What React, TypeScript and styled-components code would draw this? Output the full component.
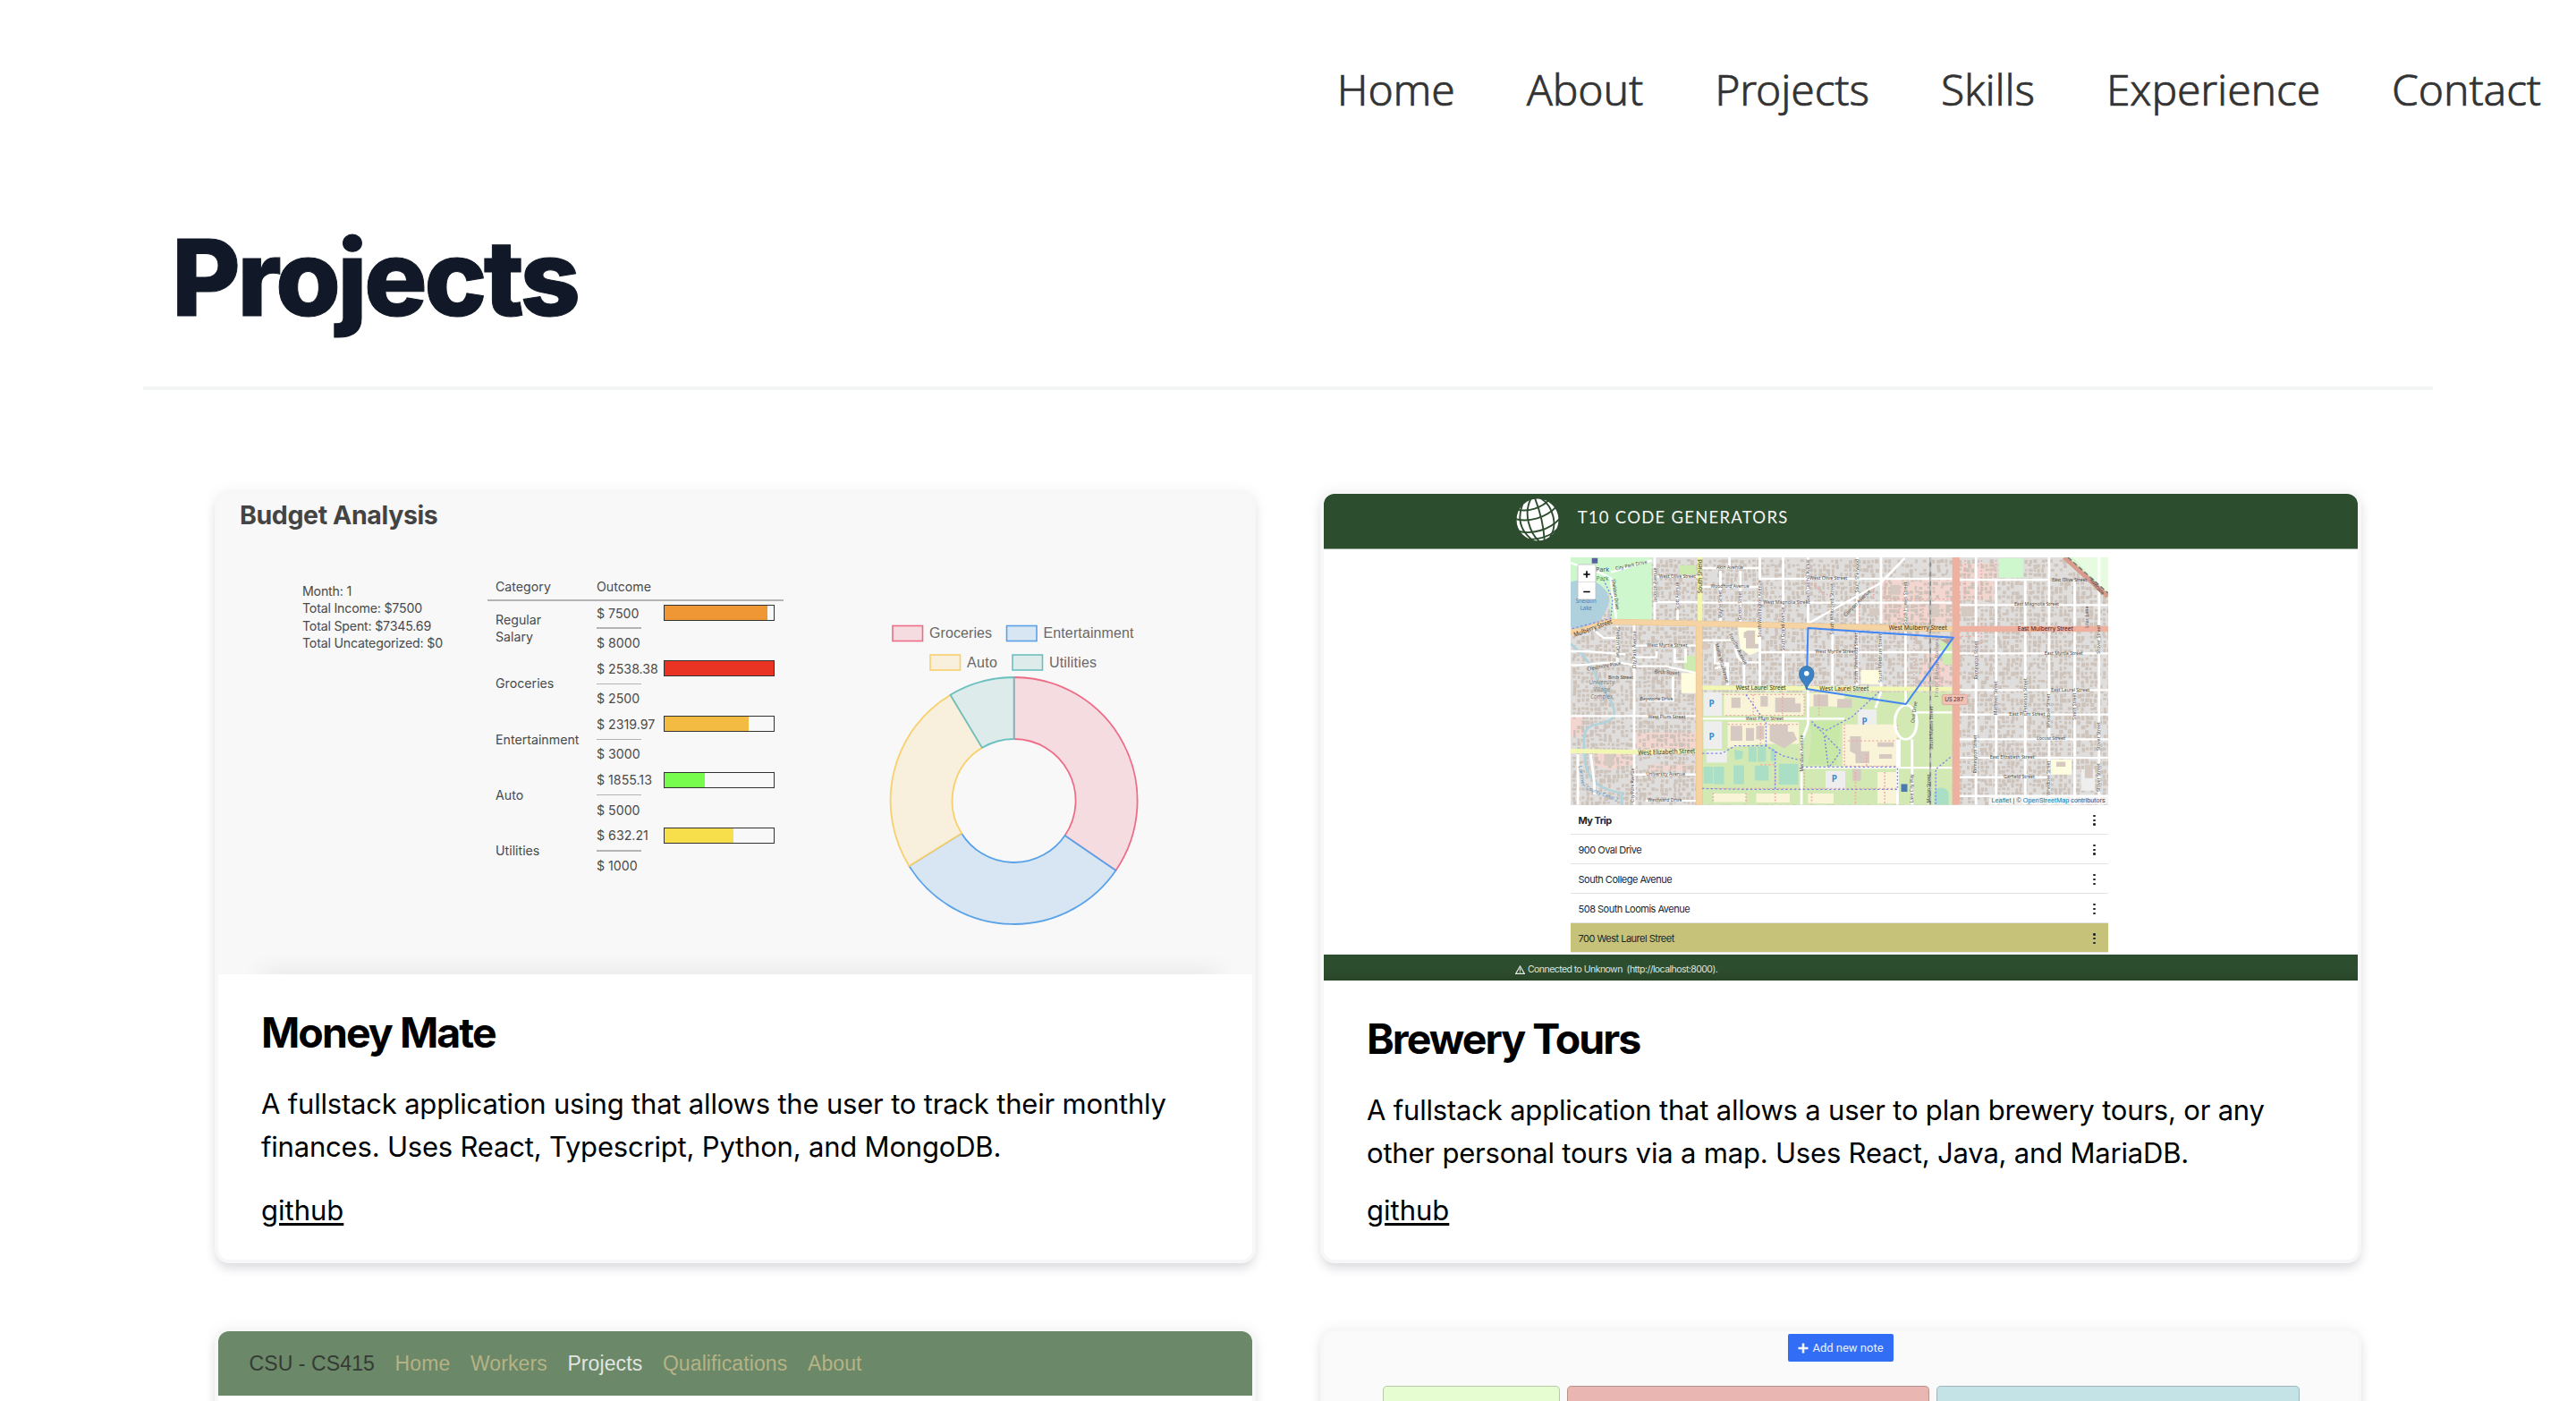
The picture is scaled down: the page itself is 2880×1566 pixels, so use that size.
import React from 'react';
import styled, { createGlobalStyle, css } from 'styled-components';

const sans = `Inter, 'Liberation Sans', sans-serif`;

const GlobalStyle = createGlobalStyle`
  *, *::before, *::after { box-sizing: border-box; }
  body { margin: 0; background: #fff; color: #000; font-family: ${sans}; }
  #root { height: 1566px; overflow: hidden; }
`;

/* ---------- page ---------- */

const Nav = styled.nav`
  display: flex;
  justify-content: flex-end;
  align-items: center;
  gap: 80px;
  height: 200px;
  padding-right: 39px;
`;

const NavLink = styled.a`
  color: #333;
  font: 300 48px/72px 'Noto Sans', 'Open Sans', sans-serif;
  letter-spacing: -0.15px;
  -webkit-text-stroke: 0.7px #333;
`;

const Main = styled.main`
  width: 2560px;
  margin: 0 auto;
`;

const PageHeader = styled.header`
  padding: 50px 32px 62px;
  border-bottom: 4px solid #f3f4f4;
`;

const PageTitle = styled.h1`
  margin: 0;
  color: #111827;
  font-size: 118px;
  line-height: 120px;
  font-weight: 800;
  letter-spacing: -3.65px;
  -webkit-text-stroke: 1px #111827;
`;

const ProjectGrid = styled.section`
  display: grid;
  grid-template-columns: 1fr 1fr;
  grid-auto-rows: 864px;
  gap: 72px;
  padding: 112px 80px 0;
`;

const Card = styled.article`
  display: flex;
  flex-direction: column;
  border: 4px solid #f7f7f8;
  border-radius: 16px;
  background: #fff;
  box-shadow: 0 8px 12px -2px rgba(30, 30, 60, 0.13), 0 0 16px rgba(0, 0, 0, 0.05);
`;

const CardBody = styled.div`
  flex: 1;
  display: flex;
  flex-direction: column;
  padding: 32px 48px 31px;
`;

const CardTitle = styled.h2`
  margin: 0 0 23px;
  font-size: 46.5px;
  line-height: 66px;
  font-weight: 700;
  letter-spacing: -1.95px;
`;

const CardText = styled.p`
  margin: 0;
  font-size: 31px;
  line-height: 48px;
  letter-spacing: -0.19px;
`;

const CardLink = styled.a`
  align-self: flex-start;
  margin-top: auto;
  font-size: 31px;
  line-height: 48px;
  letter-spacing: 0;
  text-decoration: underline;
  text-decoration-thickness: 3px;
  text-underline-offset: 3px;
`;

const Shot = styled.div<{ $height: number; $bg: string }>`
  position: relative;
  flex: none;
  height: ${(p) => p.$height}px;
  overflow: hidden;
  border-radius: 12px 12px 0 0;
  background: ${(p) => p.$bg};
`;

/* ---------- budget preview ---------- */

const BudgetShot = styled(Shot)`
  color: #4a4a4a;
  font-size: 14.2px;
  line-height: 19.6px;
  &::after {
    content: '';
    position: absolute;
    left: 50px;
    right: 40px;
    bottom: -10px;
    height: 10px;
    box-shadow: 0 0 26px 2px rgba(0, 0, 0, 0.1);
  }
`;

const BudgetTitle = styled.h3`
  margin: 0;
  padding: 6px 0 0 24px;
  color: #444;
  font-size: 28.5px;
  line-height: 36px;
  font-weight: 700;
  letter-spacing: -0.38px;
`;

const BudgetColumns = styled.div`
  display: grid;
  grid-template-columns: 301px 331px 524px;
`;

const BudgetStats = styled.div`
  padding: 56.7px 0 0 94px;
  letter-spacing: -0.2px;
`;

const BudgetTable = styled.div`
  padding-top: 48px;
`;

const rowColumns = css`
  display: grid;
  grid-template-columns: 113px 75px 124px;
  padding-left: 9px;
`;

const BudgetHead = styled.div`
  ${rowColumns}
  height: 30px;
  padding-top: 4px;
  border-bottom: 2px solid #b4b4b4;
`;

const BudgetRow = styled.div`
  ${rowColumns}
  height: 62.2px;
  align-items: center;
`;

const Category = styled.span`
  width: 60px;
  padding-bottom: 2px;
`;

const Outcome = styled.div`
  display: flex;
  flex-direction: column;
  gap: 6.2px;
  padding-bottom: 2px;
  white-space: nowrap;
`;

const OutcomeRule = styled.span`
  width: 50px;
  height: 1.5px;
  background: #b4b4b4;
`;

const Meter = styled.div`
  align-self: start;
  height: 18px;
  margin-top: 4px;
  border: 1px solid #333;
`;

const MeterFill = styled.div`
  height: 100%;
`;

const ChartText = styled.text`
  fill: #686868;
  font: 16px 'Liberation Sans', Arial, sans-serif;
`;

const budget = [
  { name: 'Regular Salary', spent: '7500', limit: '8000', color: '#ef9735', fill: 94.5 },
  { name: 'Groceries', spent: '2538.38', limit: '2500', color: '#e93323', fill: 100 },
  { name: 'Entertainment', spent: '2319.97', limit: '3000', color: '#f3bb42', fill: 77.3 },
  { name: 'Auto', spent: '1855.13', limit: '5000', color: '#77fb4c', fill: 37 },
  { name: 'Utilities', spent: '632.21', limit: '1000', color: '#f7de4b', fill: 63 },
];

const slices = [
  { name: 'Groceries', value: 2538.38, fill: '#f5dce0', stroke: '#ee6c87', x: 122, y: 105.5, w: 70 },
  { name: 'Entertainment', value: 2319.97, fill: '#d8e6f3', stroke: '#5aa2e8', x: 249.5, y: 105.5, w: 101 },
  { name: 'Auto', value: 1855.13, fill: '#f8efdc', stroke: '#f8cf6a', x: 164, y: 138, w: 34 },
  { name: 'Utilities', value: 632.21, fill: '#ddecea', stroke: '#6bc0bf', x: 256, y: 138, w: 53 },
];

function Donut() {
  const cx = 257.6;
  const cy = 301;
  const outer = 138;
  const inner = 69;
  const total = slices.reduce((sum, s) => sum + s.value, 0);
  const point = (r: number, t: number) =>
    `${(cx + r * Math.sin(t * 2 * Math.PI)).toFixed(2)} ${(cy - r * Math.cos(t * 2 * Math.PI)).toFixed(2)}`;
  let start = 0;
  return (
    <svg width="524" height="495" viewBox="0 0 524 495">
      {slices.map((s) => {
        const a = start;
        const b = start + s.value / total;
        start = b;
        return (
          <path
            key={s.name}
            d={`M${point(outer, a)}A${outer} ${outer} 0 0 1 ${point(outer, b)}L${point(inner, b)}A${inner} ${inner} 0 0 0 ${point(inner, a)}Z`}
            fill={s.fill}
            stroke={s.stroke}
            strokeWidth="1.8"
          />
        );
      })}
      {slices.map((s) => (
        <g key={s.name}>
          <rect x={s.x} y={s.y} width="33.5" height="17" fill={s.fill} stroke={s.stroke} strokeWidth="1.6" />
          <ChartText x={s.x + 41} y={s.y + 13.5} textLength={s.w}>{s.name}</ChartText>
        </g>
      ))}
    </svg>
  );
}

function BudgetPreview() {
  return (
    <BudgetShot $height={537} $bg="#f8f8f8">
      <BudgetTitle>Budget Analysis</BudgetTitle>
      <BudgetColumns>
        <BudgetStats>
          <div>Month: 1</div>
          <div>Total Income: $7500</div>
          <div>Total Spent: $7345.69</div>
          <div>Total Uncategorized: $0</div>
        </BudgetStats>
        <BudgetTable>
          <BudgetHead>
            <span>Category</span>
            <span>Outcome</span>
          </BudgetHead>
          {budget.map((b) => (
            <BudgetRow key={b.name}>
              <Category>{b.name}</Category>
              <Outcome>
                <span>$ {b.spent}</span>
                <OutcomeRule />
                <span>$ {b.limit}</span>
              </Outcome>
              <Meter>
                <MeterFill style={{ width: `${b.fill}%`, background: b.color }} />
              </Meter>
            </BudgetRow>
          ))}
        </BudgetTable>
        <Donut />
      </BudgetColumns>
    </BudgetShot>
  );
}

/* ---------- brewery preview ---------- */

const TourHeader = styled.header`
  display: flex;
  align-items: flex-start;
  gap: 21px;
  height: 62px;
  padding: 4.7px 0 0 214.7px;
  background: #2d4d2f;
  border-bottom: 1px solid #8aa08b;
`;

const TourBrand = styled.span`
  padding-top: 9px;
  color: #f4f6f4;
  font: 400 18.5px/24px Lato, sans-serif;
  letter-spacing: 1.25px;
`;

const TourContent = styled.div`
  width: 601px;
  margin: 9.3px 0 2px 276px;
`;

const TripRow = styled.div<{ $head?: boolean; $active?: boolean }>`
  display: flex;
  align-items: center;
  justify-content: space-between;
  height: 33.1px;
  padding: 2px 14px 0 8.5px;
  border-bottom: 1px solid #e3e3e3;
  background: ${(p) => (p.$active ? '#c7c27a' : '#fff')};
  color: #222629;
  font-size: 11px;
  line-height: 16px;
  font-weight: ${(p) => (p.$head ? 700 : 400)};
  letter-spacing: -0.5px;
`;

const Kebab = styled.span`
  display: grid;
  gap: 2.4px;
  i { width: 2.6px; height: 2.4px; border-radius: 1.2px; background: #222629; }
`;

const TourFooter = styled.footer`
  display: flex;
  align-items: center;
  gap: 3px;
  height: 29px;
  padding: 5px 0 0 214px;
  background: linear-gradient(#2d4d2f 60%, #294529);
  color: #dde5dd;
  font-size: 10.5px;
  line-height: 16px;
  letter-spacing: -0.55px;
  white-space: pre;
`;

const MapLabel = styled.text<{ $size: number; $fill: string; $bold?: boolean }>`
  fill: ${(p) => p.$fill};
  font: ${(p) => (p.$bold ? 700 : 400)} ${(p) => p.$size}px 'Noto Sans', sans-serif;
  text-anchor: middle;
`;

const MapFrame = styled.svg`
  display: block;
`;

/* Map geometry is kept in survey units and projected to pixels. */
const SX = 601 / 1472;
const SY = 276.4 / 829;
const px = (u: number) => (u - 40) * SX;
const py = (v: number) => (v - 40) * SY;

function buildings() {
  let seed = 7;
  const rnd = () => {
    seed = (seed * 16807) % 2147483647;
    return seed / 2147483647;
  };
  let d = '';
  for (let v = 46; v < 866; v += 15) {
    for (let u = 44; u < 1510; u += 12) {
      if (rnd() < 0.24) continue;
      const w = 6 + rnd() * 5;
      const h = 7 + rnd() * 8;
      d += `M${(u + rnd() * 4).toFixed(1)} ${(v + rnd() * 4).toFixed(1)}h${w.toFixed(1)}v${h.toFixed(1)}h${(-w).toFixed(1)}z`;
    }
  }
  return d;
}

const BUILDINGS = buildings();

/* Commercial zones sit under the building footprints. */
const ZONES =
  'M890 115H1085V262H890ZM1010 360H1085V470H990ZM1110 60H1205V185H1110ZM100 690H212V735L150 752L100 735ZM218 628H385V682H218ZM40 575H75V640H40ZM250 735H380V755H250Z';

const areas: [string, string][] = [
  ['#d2e9b3', 'M400 492H1085V869H400Z'],
  ['#cff7cd', 'M40 40H262V250H150L145 160L100 125H40Z'],
  ['#aed1dd', 'M40 122C70 112 110 115 128 140C145 160 150 190 138 215C130 245 95 280 70 285L40 275Z'],
  ['#cff7cd', 'M1212 42H1280V108H1212Z'],
  ['#d5f5cf', 'M1385 40H1512V180Z'],
  ['#e7fbe0', 'M1415 40H1512V165Z'],
  ['#cdebb0', 'M350 370H384V424H350ZM337 66H384V98H337ZM1050 320H1085V400H1060Z'],
  ['#fffddf', 'M343 428H384V495H343ZM498 274H556V356L530 368L505 345ZM1355 718H1412V768H1355ZM835 418H890V465H835Z'],
  ['#eeeeee', 'M404 492H454V572H404ZM404 590H454V682H404ZM826 550H878V628H826ZM738 755H792V820H738ZM412 688H468V728H412ZM1438 750H1476V822H1438Z'],
  ['#f9f4d8', 'M460 495H680V570H460ZM470 592H665V665H560L470 678ZM785 600H935V740H785ZM690 495H790V540H690Z'],
  ['#f9f4d8', 'M430 832H520V860H430ZM548 832H640V862H548ZM690 832H760V865H690ZM880 760H935V865H880Z'],
  ['#d6c9c1', 'M478 605H510V655H478ZM585 600H635V625H650L660 650L625 680L585 655ZM520 612H542V655H520ZM548 605H570V650H548ZM480 510H505V545H480ZM600 510H655V530H670V560H600ZM805 640L835 640V690H858V730H820V700L805 690ZM705 500H745V540H705ZM560 505H580V540H560ZM880 660H925V675H880ZM885 700H920V715H885ZM812 745H835V790H812ZM770 515H810V545H770Z'],
  ['#d6c9c1', 'M524 285H545V330H555V345H520V310H514V292ZM402 320H416V350H402ZM915 132H942V165H915ZM858 210H885V235H858ZM1020 195H1048V240H1020ZM1448 735H1470V780H1448ZM1370 725H1395V742H1370ZM132 700H158V738H132ZM1110 205H1145V238H1110Z'],
  ['#aadfc6', 'M527 676H549V725H527ZM552 674H575V725H552ZM486 737H515V800H486ZM544 738H582V788H544ZM610 732H663V802H610ZM404 742H430V798H404ZM432 742H460V800H432ZM588 680H598V722H588Z'],
  ['#aadfc6', 'M1035 869V835C1035 805 1075 805 1075 835V869ZM488 685L512 690L510 715L490 720Z'],
  ['#c2a79b', 'M1052 315L1085 312L1072 332Z'],
];

const minorRoads =
  'M270 40V250M333 130V250M450 85V255M505 85V258M475 40V75M558 40V265M622 40V470M690 40V275M757 130V262M825 40V262M890 40V262M957 130V275' +
  'M270 105H390M270 190H390M400 76H560M400 139H560M560 112H1085M400 192H1085M690 262L890 125L955 42M168 270V395M214 262V869M214 336H385M214 375H275V355M325 345V390H355V345' +
  'M558 275V470M558 358H1085M757 285V470M825 290V470M890 290V485M957 290V530M400 318H480C500 320 480 380 520 392H555M435 330V395H470V470M435 412L470 400M515 400V470' +
  'M214 405H300L385 428M235 520H320V470M320 440V520M210 768H385M245 856H385M40 572H385M40 355L85 355L190 365M40 400C80 410 130 380 210 400M100 280L130 310H165' +
  'M400 581H790M690 485V600L672 660V869M672 745H1085M935 650V869M875 545L890 490M940 650V745M985 560H1085M975 650V869' +
  'M1150 40V869M1205 115V869M1285 115V869M1350 40V869M1420 115V869M1487 40V869M1105 115H1350M1105 200H1512M1105 362H1512M1105 485H1512M1105 567H1512M1105 650H1512M1105 712H1512M1105 777H1350M1105 840H1512' +
  'M60 700V869M95 700L105 800V835M40 58C60 70 110 80 150 110L165 250M150 90L262 50';

type Label = [string, number, number, number, number?, number?, string?];

/* text, u, v, length in px, rotation, size, colour */
const labels: Label[] = [
  ['City Park Drive', 207, 72, 36, -12], ['Akin Avenue', 476, 79, 30], ['West Olive Street', 332, 110, 41], ['Woodford Avenue', 476, 143, 43],
  ['West Olive Street', 746, 115, 42], ['West Magnolia Street', 631, 197, 52], ['East Olive Street', 1406, 121, 39], ['East Magnolia Street', 1316, 202, 50],
  ['West Myrtle Street', 304, 339, 45], ['West Myrtle Street', 765, 362, 45], ['East Myrtle Street', 1390, 367, 43], ['Birch Street', 303, 431, 28, 4], ['Birch Street', 177, 448, 28],
  ['Crestmore Place', 132, 410, 38, -10], ['Baystone Drive', 275, 519, 37], ['West Plum Street', 303, 579, 42], ['West Plum Street', 571, 586, 42], ['East Laurel Street', 1408, 490, 43],
  ['East Plum Street', 1290, 570, 40], ['Locust Street', 1355, 653, 32], ['East Elizabeth Street', 1249, 716, 50], ['Garfield Street', 1268, 781, 35],
  ['University Avenue', 300, 773, 44], ['Westward Drive', 298, 860, 38],
  ['Jackson Avenue', 274, 132, 38, -90], ['Scott Avenue', 336, 170, 31, -90], ['Wayne Street', 454, 197, 31, -90], ['Gordon Street', 509, 202, 32, -90],
  ['South Washington Avenue', 562, 212, 64, -90], ['South Grand Avenue', 626, 280, 49, -90], ['South Loomis Avenue', 694, 118, 47, -90], ['South Whitcomb Street', 761, 213, 57, -90],
  ['South Sherwood', 829, 102, 37, -90], ['South Sherwood Street', 827, 378, 56, -90], ['South Meldrum Street', 893, 378, 54, -90], ['South Howes Street', 961, 195, 48, -90],
  ['Canyon Avenue', 828, 197, 40, -45], ['Sheldon Drive', 158, 165, 34, 82], ['Sheldon Drive', 166, 325, 34, 90], ['City Park Avenue', 219, 350, 42, -90], ['City Park Avenue', 213, 804, 38, -90],
  ['Frontier Avenue', 494, 350, 38, 62], ['Monte Vista Avenue', 450, 397, 46, 74], ['Meridian Avenue', 677, 697, 41, -90], ['Oval Drive', 985, 560, 24, -82],
  ['South Mason Street', 1033, 612, 48, -90], ['Mason Street', 1025, 815, 32, -90], ['Lake City Way', 977, 815, 32, -90],
  ['Remington Street', 1154, 385, 43, -90], ['Remington Street', 1153, 700, 43, -90], ['Mathews Street', 1208, 512, 38, -90], ['Peterson Street', 1289, 503, 38, -90],
  ['Whedbee Street', 1354, 555, 38, -90], ['Whedbee Street', 1353, 780, 38, -90], ['Smith Street', 1423, 540, 30, -90], ['Lilac Lane', 1457, 240, 24, -90], ['Stover Street', 1491, 315, 32, -90],
  ['Stover Street', 1489, 640, 32, -90], ['Stover Street', 1489, 778, 32, -90], ['Riverside', 1478, 142, 22, 50],
  ['Front Range Railway', 1046, 405, 70, -90, 6, '#9a8f8c'],
  ['Mulberry Street', 103, 284, 45, -20, 7.4, '#3b2f1d'], ['West Mulberry Street', 991, 284, 65, 0, 7.4, '#3b2f1d'], ['East Mulberry Street', 1340, 287, 62, 0, 7.4, '#3b1f1d'],
  ['West Laurel Street', 561, 485, 56, 0, 7.4, '#33331d'], ['West Laurel Street', 789, 487, 55, 0, 7.4, '#33331d'], ['West Elizabeth Street', 303, 699, 64, -2, 7.4, '#33331d'],
  ['South Shield', 400, 104, 38, -90, 7.4, '#33331d'],
  ['Park', 127, 88, 15, 0, 7.4, '#3a4a9a'], ['Park', 127, 117, 14, 0, 7, '#4f8a4f'], ['Sheldon', 82, 194, 23, 0, 6.4, '#5578ad'], ['Lake', 82, 218, 13, 0, 6.4, '#5578ad'],
  ['University', 125, 467, 28, 0, 6.2, '#808080'], ['Village', 125, 491, 19, 0, 6.2, '#808080'], ['Complex', 125, 514, 25, 0, 6.2, '#808080'],
  ['Larimer', 66, 775, 24, 80, 6, '#5b8fb8'], ['County Canal 2', 124, 838, 38, 22, 6, '#5b8fb8'],
];

function TripMap() {
  return (
    <MapFrame width="601" height="276.4" viewBox="0 0 601 276.4">
      <rect width="601" height="277" fill="#dfdedd" />
      <g transform={`scale(${SX} ${SY}) translate(-40 -40)`} fill="none">
        <path d={ZONES} fill="#f3d6d0" />
        <path d={BUILDINGS} fill="#cec3ba" />
        {areas.map(([fill, d], i) => (
          <path key={i} d={d} fill={fill} />
        ))}
        <path d="M692 590H780L770 735H690L700 640Z" fill="#c8e8a8" />
        <g stroke="#f0a9a4" strokeWidth="4" strokeDasharray="5 6">
          <path d="M455 500H680V570H460M470 600H665M560 595V665M790 600V740H935V600M540 500V570M620 495V565M720 500V570M800 655H930M850 700V740M430 830V865M520 830V865M600 830V865M700 830V865M400 815H935M900 760V865M820 760V865M680 750V815M1120 50V180M1165 50V180M1205 50V110M900 118V180H1085M940 200V260M1005 200V260M830 205V262M1165 260V350M1110 305H1160M560 735H600V800M690 120L760 180M980 300V470M1050 410V470M870 130V180" />
        </g>
        <path d="M40 330C110 400 100 440 140 500C170 560 170 590 110 600C60 610 80 680 80 730C90 800 130 820 180 830V869" stroke="#b0d4dd" strokeWidth="7" />
        <path d={minorRoads} stroke="#fff" strokeWidth="7" />
        <path d="M960 535C915 540 920 650 957 650C995 650 1000 545 960 535Z" stroke="#fff" strokeWidth="8" />
        <path d="M394 40V258" stroke="#f3f6b0" strokeWidth="13" />
        <path d="M400 477L1085 482M40 689L212 692L385 690" stroke="#f3f7b4" strokeWidth="15" />
        <path d="M40 290C90 290 110 255 160 256L390 262L1085 280M392 258V869" stroke="#e9c48f" strokeWidth="19" />
        <path d="M40 290C90 290 110 255 160 256L390 262L1085 280M392 258V869" stroke="#f6d3a2" strokeWidth="16" />
        <path d="M1392 40L1512 172" stroke="#d99b8b" strokeWidth="14" />
        <path d="M1095 40V869M1095 280H1512" stroke="#eeb09f" strokeWidth="20" />
        <path d="M1025 40V869" stroke="#8c8c8c" strokeWidth="4.5" />
        <path d="M1025 40V869" stroke="#e8e8e8" strokeWidth="2.4" strokeDasharray="16 16" />
        <path d="M1402 40L1512 160" stroke="#777" strokeWidth="4" strokeDasharray="14 8" />
        <g stroke="#7f86e8" strokeWidth="3.600" strokeDasharray="6 6">
          <path d="M400 697H455L490 672H575L620 705L668 720M600 690V820M400 815L520 818H935V745M672 743H935M885 490L810 575L740 620L700 600M700 590L780 690L750 740M735 640L745 740M520 500L575 595V670M130 115L155 180L150 245L40 280M1080 710L1040 750V869" />
        </g>
        <rect x="1057" y="500" width="70" height="34" rx="5" fill="#f0c0b5" stroke="#dba094" strokeWidth="2" />
        <path d="M98 42H114V60H98Z" fill="#5a5f9f" />
        <path d="M945 800H962V826H945Z" fill="#4a7ab0" />
      </g>
      {labels.map(([text, u, v, len, rot = 0, size = 5.8, fill = '#4a4a4a'], i) => (
        <MapLabel
          key={i}
          $size={size}
          $fill={fill}
          textLength={len}
          lengthAdjust="spacingAndGlyphs"
          transform={`translate(${px(u).toFixed(2)} ${py(v).toFixed(2)}) rotate(${rot})`}
        >
          {text}
        </MapLabel>
      ))}
      {[[426, 540], [426, 653], [845, 601], [762, 794]].map(([u, v]) => (
        <MapLabel key={`${u}-${v}`} $size={10} $fill="#3f8fd0" $bold x={px(u)} y={py(v)}>P</MapLabel>
      ))}
      <MapLabel $size={6.6} $fill="#4d2f2b" x={px(1090)} y={py(523)} textLength="21">US 287</MapLabel>
      <path
        d={`M${px(686)} ${py(481)}L${px(690)} ${py(277)}L${px(1088)} ${py(309)}L${px(958)} ${py(532)}Z`}
        fill="none"
        stroke="#4285f4"
        strokeWidth="2"
        strokeLinejoin="round"
      />
      <path d={`M${px(686)} ${py(482)}c-2-7-8.200-10-8.200-17.200a8.200 8.600 0 0 1 16.400 0c0 7.200-6.200 10.200-8.200 17.200z`} fill="#3a82c4" stroke="#2e6da4" strokeWidth=".8" />
      <circle cx={px(686)} cy={py(429)} r="2.800" fill="#fff" />
      <rect x="8" y="8" width="20" height="39" rx="1.500" fill="#fff" stroke="#bdbdbd" strokeWidth=".8" />
      <path d="M8 27.500H28" stroke="#ccc" strokeWidth=".6" />
      <path d="M14.300 19H21.700M18 15.300V22.700M14.300 38.500H21.700" stroke="#000" strokeWidth="1.600" />
      <rect x="468" y="266" width="133" height="10.400" fill="#fff" fillOpacity=".7" />
      <text x="470.500" y="274" fontFamily="'Liberation Sans', sans-serif" fontSize="7.200" fill="#444" textLength="127">
        <tspan fill="#0078a8">Leaflet</tspan> | © <tspan fill="#0078a8">OpenStreetMap</tspan> contributors
      </text>
    </MapFrame>
  );
}

function Globe() {
  return (
    <svg width="48" height="48" viewBox="-24 -24 48 48">
      <circle r="23.500" fill="#fff" />
      <g transform="rotate(-14)" fill="none" stroke="#2d4d2f" strokeWidth="1.900">
        <path d="M-2-24C-14-10-12 12-4 24M3-24C5-8 5 8 2 24M8-24C22-10 20 12 9 22M-12-21C-24-4-20 10-10 22" />
        <path d="M-24-7C-10 1 10 0 24-9M-24 7C-10 15 10 14 24 5M-18-16C-8-11 8-12 17-18M-20 17C-8 22 8 22 18 16" />
      </g>
    </svg>
  );
}

const stops = ['900 Oval Drive', 'South College Avenue', '508 South Loomis Avenue', '700 West Laurel Street'];

function Dots() {
  return (
    <Kebab>
      <i />
      <i />
      <i />
    </Kebab>
  );
}

function BreweryPreview() {
  return (
    <Shot $height={544} $bg="#fff">
      <TourHeader>
        <Globe />
        <TourBrand>T10 CODE GENERATORS</TourBrand>
      </TourHeader>
      <TourContent>
        <TripMap />
        <TripRow $head>
          My Trip
          <Dots />
        </TripRow>
        {stops.map((stop, i) => (
          <TripRow key={stop} $active={i === 3}>
            {stop}
            <Dots />
          </TripRow>
        ))}
      </TourContent>
      <TourFooter>
        <svg width="11" height="10" viewBox="0 0 11 10">
          <path d="M5.500 1L10.300 9.300H.700Z" fill="none" stroke="#e6ece6" strokeWidth="1.200" />
          <path d="M5.500 3.600V6.400M5.500 7.200V8.200" stroke="#e6ece6" strokeWidth="1.100" />
        </svg>
        {'Connected to Unknown  (http://localhost:8000).'}
      </TourFooter>
    </Shot>
  );
}

/* ---------- course site preview ---------- */

const CourseNav = styled.nav`
  display: flex;
  align-items: center;
  gap: 22.6px;
  height: 72px;
  padding: 0 0 1px 34.5px;
  background: #6b8868;
  font: 400 23px/32px 'Liberation Sans', Arial, sans-serif;
  letter-spacing: 0.1px;
`;

const CourseLink = styled.span<{ $tone?: 'brand' | 'active' }>`
  color: ${(p) => (p.$tone === 'brand' ? '#353b35' : p.$tone === 'active' ? '#e2e5e1' : '#b5b285')};
`;

function CoursePreview() {
  return (
    <Shot $height={540} $bg="#fff">
      <CourseNav>
        <CourseLink $tone="brand">CSU - CS415</CourseLink>
        <CourseLink>Home</CourseLink>
        <CourseLink>Workers</CourseLink>
        <CourseLink $tone="active">Projects</CourseLink>
        <CourseLink>Qualifications</CourseLink>
        <CourseLink>About</CourseLink>
      </CourseNav>
    </Shot>
  );
}

/* ---------- notes preview ---------- */

const NotesShot = styled(Shot)`
  display: flex;
  flex-direction: column;
  align-items: center;
  padding: 3px 0 0 2px;
`;

const AddNote = styled.div`
  display: flex;
  align-items: center;
  justify-content: center;
  gap: 4px;
  width: 118px;
  height: 31px;
  margin-right: 2px;
  border-radius: 2px;
  background: #326ef5;
  color: #e8effd;
  font: 400 13px/18px Roboto, sans-serif;
`;

const NoteRow = styled.div`
  display: grid;
  grid-template-columns: 198px 405px 406px;
  gap: 8px;
  width: 1025px;
  margin: 27px 2px 0 0;
`;

const Note = styled.div<{ $color: string }>`
  height: 200px;
  border: 1px solid rgba(0, 0, 0, 0.2);
  border-radius: 5px;
  background: ${(p) => p.$color};
`;

function NotesPreview() {
  return (
    <NotesShot $height={540} $bg="#fafafa">
      <AddNote>
        <svg width="12" height="12" viewBox="0 0 12 12">
          <path d="M6 .5V11.500M.5 6H11.500" stroke="#f2f6ff" strokeWidth="2.600" />
        </svg>
        Add new note
      </AddNote>
      <NoteRow>
        <Note $color="#e5fdd1" />
        <Note $color="#eab6b2" />
        <Note $color="#c4e3e7" />
      </NoteRow>
    </NotesShot>
  );
}

/* ---------- app ---------- */

const links = ['Home', 'About', 'Projects', 'Skills', 'Experience', 'Contact'];

export default function App() {
  return (
    <>
      <GlobalStyle />
      <Nav>
        {links.map((l) => (
          <NavLink key={l}>{l}</NavLink>
        ))}
      </Nav>
      <Main>
        <PageHeader>
          <PageTitle>Projects</PageTitle>
        </PageHeader>
        <ProjectGrid>
          <Card>
            <BudgetPreview />
            <CardBody>
              <CardTitle>Money Mate</CardTitle>
              <CardText>
                A fullstack application using that allows the user to track their monthly finances. Uses React,
                Typescript, Python, and MongoDB.
              </CardText>
              <CardLink>github</CardLink>
            </CardBody>
          </Card>
          <Card>
            <BreweryPreview />
            <CardBody>
              <CardTitle>Brewery Tours</CardTitle>
              <CardText>
                A fullstack application that allows a user to plan brewery tours, or any other personal tours via a
                map. Uses React, Java, and MariaDB.
              </CardText>
              <CardLink>github</CardLink>
            </CardBody>
          </Card>
          <Card>
            <CoursePreview />
          </Card>
          <Card>
            <NotesPreview />
          </Card>
        </ProjectGrid>
      </Main>
    </>
  );
}
